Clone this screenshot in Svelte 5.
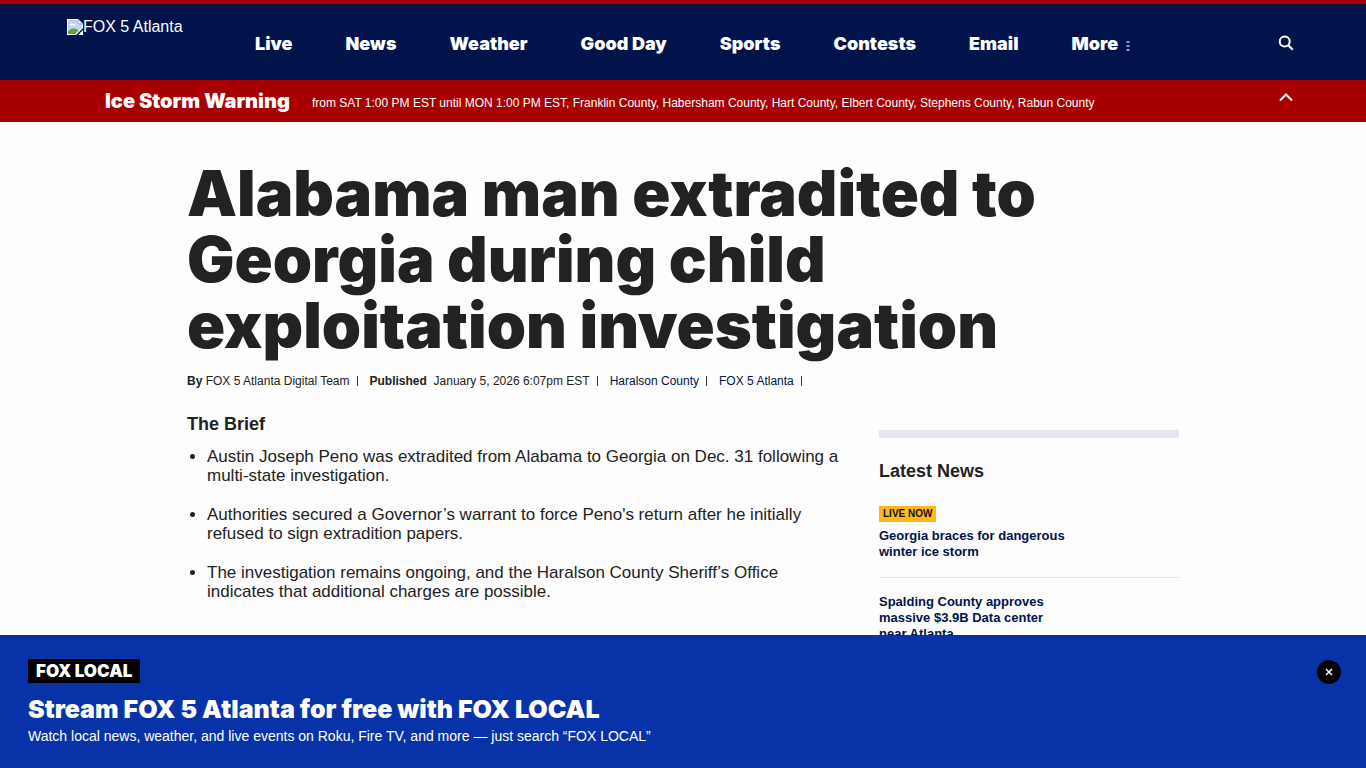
<script>
  const nav = ['Live', 'News', 'Weather', 'Good Day', 'Sports', 'Contests', 'Email', 'More'];
  const brief = [
    'Austin Joseph Peno was extradited from Alabama to Georgia on Dec. 31 following a multi-state investigation.',
    'Authorities secured a Governor’s warrant to force Peno\'s return after he initially refused to sign extradition papers.',
    'The investigation remains ongoing, and the Haralson County Sheriff’s Office indicates that additional charges are possible.'
  ];
  const latest = [
    { live: true, title: 'Georgia braces for dangerous winter ice storm' },
    { live: false, title: 'Spalding County approves massive $3.9B Data center near Atlanta' }
  ];
  let showBanner = $state(true);
</script>

<header class="top">
  <a class="logo" href="#home">
    <svg width="16" height="16" viewBox="0 0 16 16" aria-hidden="true">
      <path d="M0 0H11L16 5V9L9 16H0Z" fill="#fff" />
      <path d="M1 1H10.5V5.500H15V8.500L8 15H1Z" fill="#c2d4f3" />
      <path d="M2.500 6.500a2 2 0 0 1 3.500-1.300a1.600 1.600 0 0 1 2.500 1.300Z" fill="#fff" />
      <path d="M1 15V12.500C4 9 7 8.500 11.500 11.500L8 15Z" fill="#57a63a" />
      <path d="M11 0V5H16Z" fill="#eef2f8" stroke="#9aa3b5" stroke-width="1" />
      <path d="M16 11V16H11Z" fill="#fff" />
    </svg><span>FOX 5 Atlanta</span>
  </a>
  <nav aria-label="Main">
    {#each nav as item}
      <a href="#{item.toLowerCase().replace(' ', '-')}">{item}{#if item === 'More'}<svg class="dots" width="4" height="12" viewBox="0 0 4 12" fill="#8f9cc4" aria-hidden="true"><rect x="0.500" y="1" width="3" height="2" /><rect x="0.500" y="5" width="3" height="2" /><rect x="0.500" y="9" width="3" height="2" /></svg>{/if}</a>
    {/each}
  </nav>
  <button class="icon" aria-label="Search">
    <svg width="16" height="16" viewBox="0 0 16 16" fill="none" stroke="#fff" stroke-width="2">
      <circle cx="6.700" cy="6.500" r="5" />
      <path d="M10.200 10.200L14.800 14.800" stroke-width="2.300" />
    </svg>
  </button>
</header>

<section class="alert" aria-label="Weather alert">
  <strong>Ice Storm Warning</strong>
  <p>from SAT 1:00 PM EST until MON 1:00 PM EST, Franklin County, Habersham County, Hart County, Elbert County, Stephens County, Rabun County</p>
  <button class="icon chevron" aria-label="Collapse alert">
    <svg width="14" height="10" viewBox="0 0 14 10" fill="none" stroke="#fff" stroke-width="2"><path d="M1 8.500L7 2.500L13 8.500" /></svg>
  </button>
</section>

<main>
  <h1>Alabama man extradited to Georgia during child exploitation investigation</h1>
  <div class="byline">
    <span><b>By</b> FOX 5 Atlanta Digital Team</span>
    <span><b>Published</b>&nbsp; January 5, 2026 6:07pm EST</span>
    <span><a href="#haralson">Haralson County</a></span>
    <span><a href="#fox5">FOX 5 Atlanta</a></span>
  </div>
  <div class="columns">
    <article>
      <h2>The Brief</h2>
      <ul>
        {#each brief as point}<li>{point}</li>{/each}
      </ul>
    </article>
    <aside>
      <h2>Latest News</h2>
      {#each latest as story}
        <div class="story">
          {#if story.live}<span class="live">LIVE NOW</span>{/if}
          <h3><a href="#story">{story.title}</a></h3>
        </div>
      {/each}
    </aside>
  </div>
</main>

{#if showBanner}
  <section class="banner" aria-label="FOX LOCAL">
    <div>
      <span class="tag">FOX LOCAL</span>
      <h2>Stream FOX 5 Atlanta for free with FOX LOCAL</h2>
      <p>Watch local news, weather, and live events on Roku, Fire TV, and more — just search “FOX LOCAL”</p>
    </div>
    <button class="close" aria-label="Close" onclick={() => (showBanner = false)}>
      <svg width="8" height="8" viewBox="0 0 8 8" stroke="#fff" stroke-width="1.500"><path d="M1 1L7 7M7 1L1 7" /></svg>
    </button>
  </section>
{/if}

<style>
  :global(body) {
    background: #fdfdfd;
    color: #222;
    font-family: 'Liberation Sans', Arial, sans-serif;
  }
  h1, h2, h3, p, ul { margin: 0; padding: 0; }
  a { color: inherit; text-decoration: none; }
  button { border: 0; padding: 0; cursor: pointer; display: flex; align-items: center; justify-content: center; }
  svg { display: block; flex: none; }

  .top {
    display: flex;
    align-items: center;
    height: 76px;
    padding: 0 72px 0 67px;
    border-top: 4px solid #a80000;
    background: #00134b;
    color: #fff;
  }
  .logo {
    display: flex;
    align-self: flex-start;
    width: 188px;
    margin-top: 14px;
    font-size: 16px;
    line-height: 18px;
  }
  .logo svg { margin-top: 1px; }
  nav { display: flex; gap: 53px; flex: 1; padding-top: 4px; }
  nav a {
    display: flex;
    align-items: center;
    gap: 8px;
    font: 900 18px/24px "Arial Black", Inter, sans-serif;
    white-space: nowrap;
  }
  .dots { margin-top: 3px; }
  .icon { width: 16px; height: 24px; background: none; }
  .top .icon { padding-top: 2px; }

  .alert {
    display: flex;
    align-items: center;
    min-height: 42px;
    padding: 0 72px 0 105px;
    background: #a80000;
    color: #fff;
  }
  .alert strong { margin-right: 22px; font: 900 20px/24px "Arial Black", Inter, sans-serif; white-space: nowrap; }
  .alert p { flex: 1; padding-top: 4px; font-size: 12px; line-height: 16px; }
  .alert .chevron { padding-bottom: 8px; }

  main { max-width: 992px; margin: 0 auto; padding-top: 38px; }
  h1 { font: 900 63px/66px "Arial Black", Inter, sans-serif; max-width: 900px; }
  .byline {
    display: flex;
    align-items: center;
    gap: 12px;
    margin-top: 18px;
    font-size: 12px;
    line-height: 10px;
  }
  .byline span { padding-right: 7px; border-right: 1px solid #333; }
  .byline a { color: #00134b; }
  .columns { display: flex; justify-content: space-between; }
  article { width: 656px; padding-top: 28px; }
  h2 { font-size: 18px; line-height: 20px; }
  ul { padding: 13px 0 0 20px; font-size: 17px; line-height: 19px; }
  li + li { margin-top: 20px; }

  aside { width: 300px; margin-top: 44px; border-top: 8px solid #e6e6ee; padding-top: 23px; }
  .story { padding-top: 15px; }
  h2 + .story { padding-top: 25px; }
  .story + .story { margin-top: 17px; border-top: 1px solid #e3e4e8; padding-top: 16px; }
  .live {
    display: inline-block;
    margin-bottom: 6px;
    padding: 0 4px;
    background: #ffb81c;
    color: #111;
    font-size: 10px;
    font-weight: 700;
    line-height: 16px;
    vertical-align: top;
  }
  h3 { max-width: 190px; color: #00134b; font-size: 13px; line-height: 16px; }

  .banner {
    position: fixed;
    left: 0;
    right: 0;
    bottom: 0;
    display: flex;
    justify-content: space-between;
    align-items: flex-start;
    padding: 24px 25px 23px 28px;
    background: #0833a8;
    color: #fff;
  }
  .tag { display: block; width: fit-content; padding: 0 8px; background: #000; font: 900 17px/24px "Arial Black", Inter, sans-serif; }
  .banner h2 { margin-top: 12px; font: 900 25px/28px "Arial Black", Inter, sans-serif; }
  .banner p { margin-top: 4px; font-size: 14px; line-height: 18px; }
  .close { width: 24px; height: 24px; margin-top: 1px; border-radius: 50%; background: #000; }
</style>
